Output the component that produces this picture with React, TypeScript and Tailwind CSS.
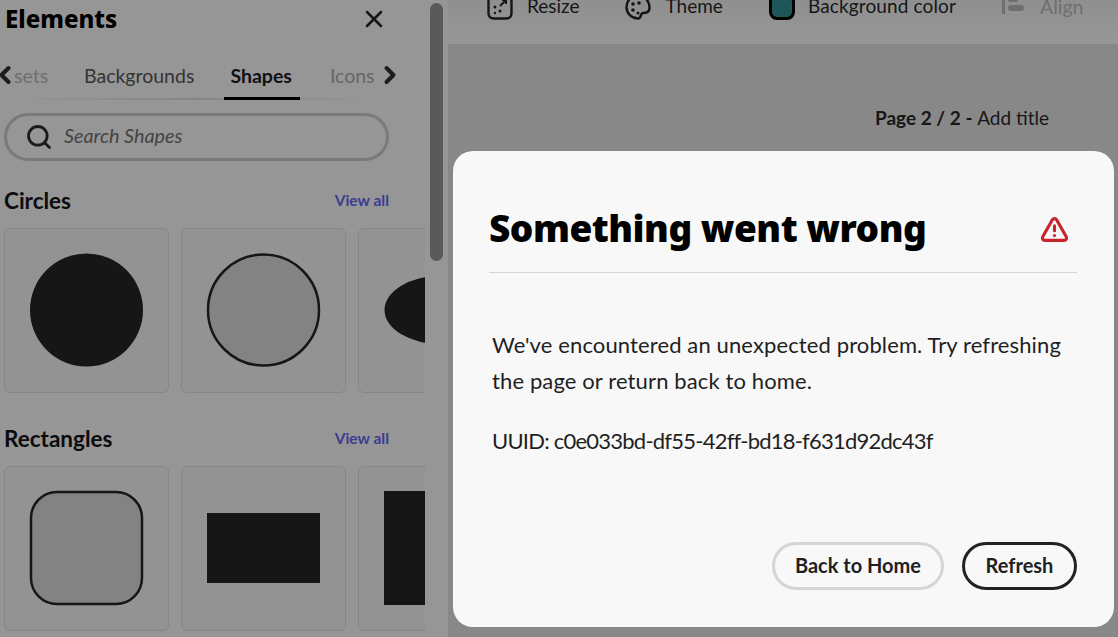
import { Search, TriangleAlert, X, ChevronLeft, ChevronRight } from 'lucide-react'
import type { ReactNode } from 'react'

const font = { fontFamily: 'Lato, "Noto Sans", sans-serif' }
const heavy = { fontFamily: '"Noto Sans", Lato, sans-serif' }

function Card({ children }: { children: ReactNode }) {
  return (
    <div className="h-[165px] w-[165px] shrink-0 overflow-hidden rounded-md border border-[#868686] bg-[#939393]">
      <svg width="163" height="163" viewBox="0 0 163 163">
        {children}
      </svg>
    </div>
  )
}

function SectionHead({ title }: { title: string }) {
  return (
    <div className="flex items-center justify-between pr-[36px]">
      <h3 className="text-[22.5px] font-bold text-[#0c0c0c]">{title}</h3>
      <a className="text-[15.5px] font-bold text-[#3c3c92]">View all</a>
    </div>
  )
}

function ResizeIcon() {
  return (
    <svg width="26" height="26" viewBox="0 0 26 26" fill="none" className="shrink-0">
      <rect x="1.5" y="1.5" width="23" height="23" rx="5" stroke="#161616" strokeWidth="2.4" />
      <circle cx="8" cy="13" r="1.5" fill="#161616" />
      <circle cx="13" cy="17" r="1.5" fill="#161616" />
      <circle cx="8" cy="19" r="1.2" fill="#161616" />
      <path d="M13 12l6-6M15 6h4v4" stroke="#161616" strokeWidth="2" />
    </svg>
  )
}

function ThemeIcon() {
  return (
    <svg width="26" height="26" viewBox="0 0 26 26" fill="none" className="shrink-0">
      <path d="M13 1.500C6.500 1.500 1.500 6.500 1.500 13S6.500 24.500 13 24.500c3 0 2.500-3 3.500-4.500s3-1 5-1.500 3-2 3-4.500C24.500 6.500 19.500 1.500 13 1.500Z" stroke="#161616" strokeWidth="2.400" />
      <circle cx="8" cy="10" r="1.800" fill="#161616" />
      <circle cx="8" cy="16" r="1.800" fill="#161616" />
      <circle cx="13" cy="19" r="1.500" fill="#161616" />
      <circle cx="14" cy="9" r="1.800" fill="#161616" />
    </svg>
  )
}

function AlignIcon() {
  return (
    <svg width="24" height="26" viewBox="0 0 24 26" className="shrink-0">
      <rect x="0" y="0" width="3" height="20" fill="#6f6f6f" />
      <rect x="6" y="2" width="10" height="6" rx="2" fill="#6f6f6f" />
      <rect x="6" y="11" width="16" height="6" rx="3" fill="#6f6f6f" />
    </svg>
  )
}

export default function App() {
  return (
    <div style={font} className="relative flex h-[637px] w-[1118px] overflow-hidden bg-[#888888] text-[#161616]">
      {/* left panel */}
      <aside className="relative flex h-full w-[448px] shrink-0 bg-[#969696]">
        <div className="w-[425px] shrink-0 overflow-hidden">
          <div className="flex h-[36px] items-center justify-between pt-[1px] pr-[37px] pl-[5px]">
            <h2 style={heavy} className="text-[24px] font-extrabold text-black">Elements</h2>
            <X size={28} strokeWidth={2.2} className="text-[#161616]" />
          </div>

          <div className="relative mt-[22px] h-[42px] w-[400px]">
            <div className="flex h-[36px] items-center overflow-hidden">
              <span className="ml-[14px] w-[70px] text-[19.5px] text-[#6f6f6f]">sets</span>
              <span className="text-[19.5px] text-[#333333]">Backgrounds</span>
              <span className="ml-[36px] text-[19.5px] font-bold text-[#111111]">Shapes</span>
              <span className="ml-[38px] w-[45px] overflow-hidden text-[19.5px] text-[#666666]">Icons</span>
            </div>
            <div className="absolute top-[40px] left-[10px] h-[2px] w-[370px] bg-gradient-to-r from-[#969696] via-[#858585] to-[#969696]" />
            <div className="absolute top-[39px] left-[224px] h-[3px] w-[76px] bg-black" />
            <ChevronLeft size={28} strokeWidth={3.4} className="absolute top-[3px] left-[-9px] text-[#1c1c1c]" />
            <ChevronRight size={28} strokeWidth={3.4} className="absolute top-[3px] left-[376px] text-[#1c1c1c]" />
          </div>

          <div className="mt-[13px] ml-[4px] flex h-[48px] w-[385px] items-center rounded-full border-[3px] border-[#7a7a7a] pl-[18px]">
            <Search size={28} strokeWidth={2.4} className="text-[#1a1a1a]" />
            <span className="mb-[3px] ml-[11px] text-[19.8px] text-[#444444] italic">Search Shapes</span>
          </div>

          <div className="mt-[23px] pl-[4px]">
            <SectionHead title="Circles" />
            <div className="mt-[10px] flex gap-[12px]">
              <Card>
                <circle cx="81.500" cy="81" r="56.500" fill="#161616" />
              </Card>
              <Card>
                <circle cx="81.500" cy="81" r="55.500" fill="#838383" stroke="#161616" strokeWidth="2.500" />
              </Card>
              <Card>
                <ellipse cx="81.500" cy="81" rx="56" ry="34" fill="#161616" />
              </Card>
            </div>
          </div>

          <div className="mt-[29px] pl-[4px]">
            <SectionHead title="Rectangles" />
            <div className="mt-[10px] flex gap-[12px]">
              <Card>
                <rect x="26" y="25" width="111" height="112" rx="26" fill="#838383" stroke="#161616" strokeWidth="2.500" />
              </Card>
              <Card>
                <rect x="25" y="46" width="113" height="70" fill="#161616" />
              </Card>
              <Card>
                <rect x="25" y="24" width="70" height="114" fill="#161616" />
              </Card>
            </div>
          </div>
        </div>
        <div className="absolute top-[3px] left-[430px] h-[258px] w-[13px] rounded-full bg-[#595959]" />
      </aside>

      {/* right side */}
      <main className="flex-1">
        <div className="h-[44px] overflow-hidden bg-gradient-to-b from-[#8f8f8f] to-[#979797]">
          <div className="-mt-[8px] flex items-center pl-[39px] text-[19px] text-[#161616]">
            <ResizeIcon />
            <span className="ml-[14px]">Resize</span>
            <span className="ml-[45px]"><ThemeIcon /></span>
            <span className="ml-[15px]">Theme</span>
            <span className="ml-[46px] h-[26px] w-[26px] rounded-lg border-[3px] border-black bg-[#1d5757]" />
            <span className="ml-[13px] tracking-[0.13px]">Background color</span>
            <span className="ml-[46px]"><AlignIcon /></span>
            <span className="ml-[14px] text-[19.5px] text-[#6f6f6f]">Align</span>
          </div>
        </div>
        <div className="mt-[60px] pl-[427px] text-[19px] text-[#161616]">
          <span className="font-bold">Page 2 / 2 - </span>Add title
        </div>
      </main>

      {/* error dialog */}
      <section className="absolute top-[151px] left-[453px] flex h-[476px] w-[661px] flex-col rounded-[20px] bg-[#f8f8f8] pr-[37px] pl-[36px]">
        <div className="flex h-[122px] items-end justify-between border-b border-[#d5d5d5] pb-[16px]">
          <h1 style={heavy} className="text-[37px] leading-[56px] font-black tracking-[-0.5px] text-black">Something went wrong</h1>
          <TriangleAlert size={29} strokeWidth={2.6} className="mr-[8px] mb-[12px] text-[#c8242c]" />
        </div>
        <p className="mt-[54px] ml-[3px] text-[22px] leading-[36px] tracking-[0.12px] whitespace-nowrap text-[#1f1f1f]">
          We've encountered an unexpected problem. Try refreshing
          <br />
          the page or return back to home.
        </p>
        <p className="mt-[24px] ml-[3px] text-[22px] leading-[36px] tracking-[-0.77px] whitespace-nowrap text-[#1f1f1f]">
          UUID: c0e033bd-df55-42ff-bd18-f631d92dc43f
        </p>
        <div className="mt-auto mb-[37px] flex justify-end gap-[18px]">
          <button className="h-[48px] w-[172px] rounded-full border-[3px] border-[#d5d5d5] pb-[2px] text-[20px] font-bold text-[#1f1f1f]">
            Back to Home
          </button>
          <button className="h-[48px] w-[115px] rounded-full border-[3px] border-[#222222] pb-[2px] text-[20px] font-bold text-[#1f1f1f]">
            Refresh
          </button>
        </div>
      </section>
    </div>
  )
}
